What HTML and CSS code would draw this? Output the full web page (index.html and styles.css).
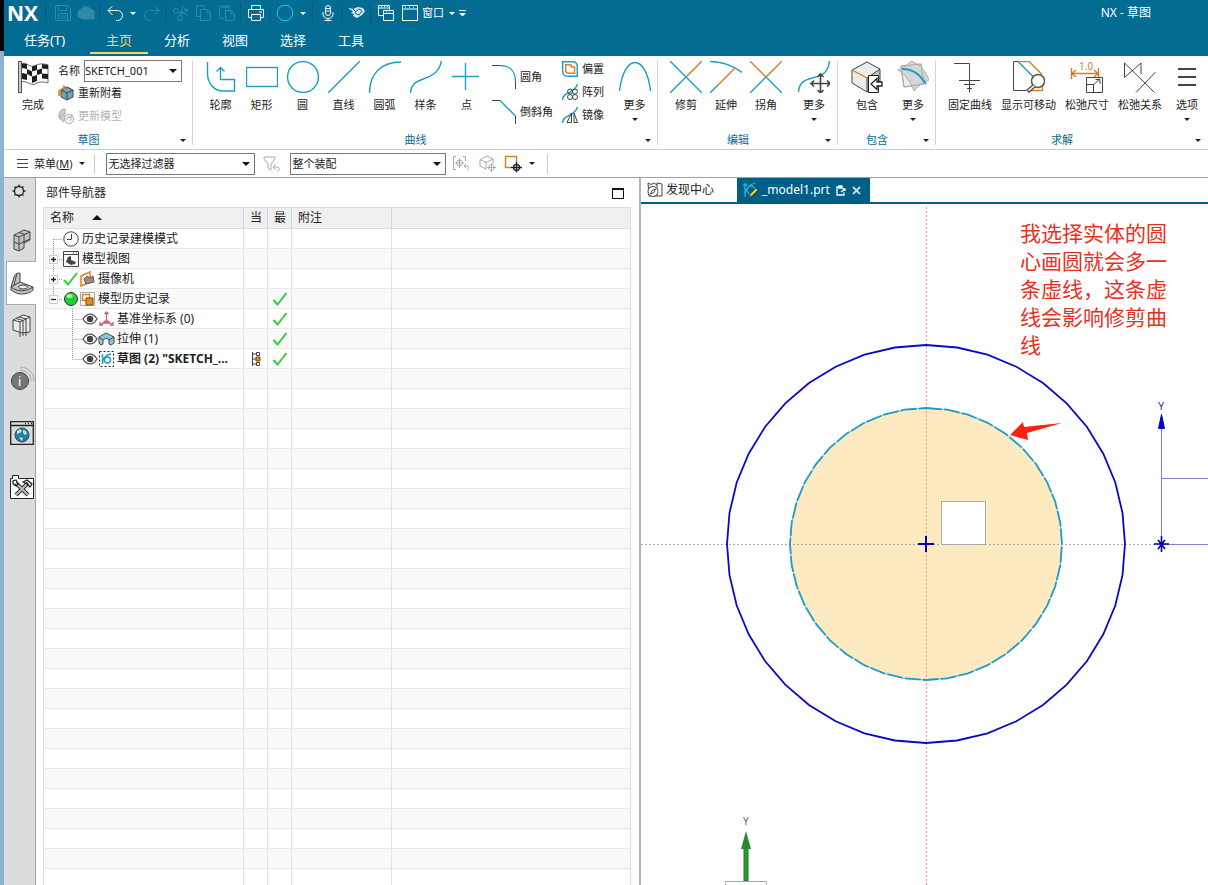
FILE: index.html
```html
<!DOCTYPE html>
<html lang="zh-CN">
<head>
<meta charset="utf-8">
<title>NX - 草图</title>
<link rel="stylesheet" href="styles.css">
</head>
<body>
<div class="app">
  <header class="titlebar">
    <div class="quickbar">
      <span class="logo">NX</span>
      <span class="qsep first"></span>
      <button class="qbtn dim" aria-label="保存"><svg width="18" height="18" viewBox="0 0 18 18"><path d="M1.500 1.500h12l3 3v12h-15zM4.500 1.500v5h8v-5M4.500 16.500v-7h9v7M6 12h6M6 14h6"/></svg></button>
      <button class="qbtn dim" aria-label="命令"><svg width="18" height="18" viewBox="0 0 18 18"><path class="dimfill" d="M1 7l8-5 8 5v8H5l-4-3z"/></svg></button>
      <span class="qsep"></span>
      <button class="qbtn" aria-label="撤销"><svg width="18" height="18" viewBox="0 0 18 18"><path d="M6.500 2L2 6.500 6.500 11M2 6.500h9.500a5 5 0 0 1 0 10H10"/></svg></button>
      <button class="qcaret" aria-label="撤销列表"><i class="caret"></i></button>
      <button class="qbtn dim" aria-label="重做"><svg width="18" height="18" viewBox="0 0 18 18"><path d="M11.500 2L16 6.500 11.500 11M16 6.500H6.500a5 5 0 0 0 0 10H8"/></svg></button>
      <span class="qsep"></span>
      <button class="qbtn dim" aria-label="剪切"><svg width="18" height="18" viewBox="0 0 18 18"><circle cx="4" cy="7" r="2.500"/><circle cx="8" cy="14" r="2.500"/><path d="M6 8l10 3M8 11.500L11 2M10 9l6-3-4-1"/></svg></button>
      <button class="qbtn dim" aria-label="复制"><svg width="18" height="18" viewBox="0 0 18 18"><path d="M5.500 12.500h-4v-11h8v4M5.500 5.500h7l3 3v8h-10zM12 5.500v3.500h3.500"/></svg></button>
      <button class="qbtn dim" aria-label="粘贴"><svg width="18" height="18" viewBox="0 0 18 18"><path d="M6 14.500H1.500v-12H4M9 2.500h2.500V5M4 3.500h5v-2H4zM7.500 6.500h6l3 3v7h-9zM13 6.500V10h3.500"/></svg></button>
      <span class="qsep"></span>
      <button class="qbtn" aria-label="打印"><svg width="18" height="18" viewBox="0 0 18 18"><path d="M4.500 5V1.500h9V5M4 13.500H1.500v-8h15v8H14M4.500 10.500h9v6h-9zM12 8h3"/></svg></button>
      <span class="qsep"></span>
      <button class="qbtn cyan" aria-label="圆"><svg width="18" height="18" viewBox="0 0 18 18"><circle cx="9" cy="9" r="7.800"/></svg></button>
      <button class="qcaret" aria-label="圆列表"><i class="caret"></i></button>
      <span class="qsep"></span>
      <button class="qbtn" aria-label="语音"><svg width="18" height="18" viewBox="0 0 18 18"><rect x="6.500" y="1.500" width="5" height="10" rx="2.500"/><path d="M7 4.500h4M7 7h4M4 8v2c0 6 10 6 10 0V8M9 14v3M5.500 16.500h7"/></svg></button>
      <span class="qsep"></span>
      <button class="qbtn" aria-label="触控"><svg width="18" height="18" viewBox="0 0 18 18"><path class="palefill" d="M1 4l4 1 5-2 5 1 2 3-3 4-5 3-4-2 1-2-3-1 2-2-4-2z"/><path class="hole" d="M7 8l4-3 3 2-3 4-3-1zM5 5l2 2"/></svg></button>
      <span class="qsep"></span>
      <button class="qbtn" aria-label="切换窗口"><svg width="18" height="18" viewBox="0 0 18 18"><path d="M6 11.500H1.500v-10h11V6M1.500 4h11M6.500 6.500h10v10h-10zM6.500 9.500h10M4 2.500h1M7 2.500h1M10 2.500h1M9 8h1M12 8h1"/></svg></button>
      <button class="qtext"><svg width="18" height="18" viewBox="0 0 18 18"><path d="M1.500 1.500h15v15h-15zM1.500 5h15M4 3.200h1M8 3.200h1M12 3.200h1"/></svg><span>窗口</span><i class="caret"></i></button>
      <button class="qcaret" aria-label="自定义"><i class="overline"></i></button>
      <h1 class="apptitle">NX - 草图</h1>
    </div>
    <nav class="tabs">
      <a class="tab task" href="#task">任务(T)</a>
      <a class="tab current" href="#home">主页</a>
      <a class="tab" href="#analysis">分析</a>
      <a class="tab" href="#view">视图</a>
      <a class="tab" href="#select">选择</a>
      <a class="tab" href="#tools">工具</a>
    </nav>
  </header>

  <section class="ribbon">
    <div class="group">
      <div class="tools sketch">
        <button class="tool"><svg width="32" height="32" viewBox="0 0 32 32"><path class="flag" d="M4 3c5-3 9 4 13 2s8-3 14-1v18c-6-2-9-1-13 1S9 19 4 21z"/><path class="blk" d="M5 2.500l5 .5v5L5 7zM15 5.500l5-1.500v5l-5 1.500zM25 3l6 1v4l-6-.5zM10 8l5 2.500v5L10 13zM20 9l5-1.500v5L20 14zM5 12l5 1v6l-5-1zM15 15.500l5-1.500v6l-5 2zM25 12.500l6 .5v5l-6-.5z"/><rect class="pole" x="1.500" y=".5" width="3" height="31"/></svg><span>完成</span></button>
        <div class="stack">
          <div class="namerow"><label for="skname">名称</label><span class="combo name"><select id="skname"><option>SKETCH_001</option></select></span></div>
          <button class="mini"><svg width="16" height="16" viewBox="0 0 16 16"><path class="cube1" d="M3 5l6-3 6 3v7l-6 3-6-3z"/><path class="k" d="M3 5l6 3 6-3M9 8v7M3 5l6-3 6 3v7l-6 3-6-3z"/><path class="o2" d="M1 11V6l6-4M5 1l2 1-1 2M1 8l3 3"/></svg><span>重新附着</span></button>
          <button class="mini" disabled><svg width="16" height="16" viewBox="0 0 16 16"><path class="gfill" d="M1 10V7c0-4 3-6 6-6v6l3 2-4 5z"/><path class="g" d="M1 10V7c0-4 3-6 6-6v5M1 10l5 4M7 6l-6 3"/><circle class="g whitein" cx="11" cy="11" r="4.500"/><path class="g" d="M9 12a2.200 2.200 0 1 1 3 1M14 6v3h-3"/></svg><span>更新模型</span></button>
        </div>
      </div>
      <footer class="gfoot"><h2>草图</h2><button class="launch" aria-label="草图选项"><i class="caret"></i></button></footer>
    </div>
    <div class="group">
      <div class="tools curves">
        <button class="tool"><svg width="32" height="32" viewBox="0 0 32 32"><path class="c" d="M2.500 1v11c0 10 6 18 16 18h11V18.500h-14V7M11.500 10.500l4-4 4 4"/></svg><span>轮廓</span></button>
        <button class="tool"><svg width="32" height="32" viewBox="0 0 32 32"><rect class="c" x=".5" y="6.500" width="31" height="19"/></svg><span>矩形</span></button>
        <button class="tool"><svg width="32" height="32" viewBox="0 0 32 32"><circle class="c" cx="16" cy="16" r="15.400"/></svg><span>圆</span></button>
        <button class="tool"><svg width="32" height="32" viewBox="0 0 32 32"><path class="c" d="M0 32L32 0"/></svg><span>直线</span></button>
        <button class="tool"><svg width="32" height="32" viewBox="0 0 32 32"><path class="c" d="M.5 32C.5 12 13 1 32 1"/></svg><span>圆弧</span></button>
        <button class="tool"><svg width="32" height="32" viewBox="0 0 32 32"><path class="c" d="M.5 32C2 12 26 24 31.500 0"/></svg><span>样条</span></button>
        <button class="tool"><svg width="32" height="32" viewBox="0 0 32 32"><path class="c" d="M1 15.500h27M14.500 2v27"/></svg><span>点</span></button>
        <div class="stack corner">
          <button class="mini"><svg width="24" height="24" viewBox="0 0 24 24"><path class="k" d="M0 .5h9M23.500 15v9"/><path class="c" d="M8 .5c10 0 15.500 6 15.500 16"/></svg><span>圆角</span></button>
          <button class="mini"><svg width="24" height="24" viewBox="0 0 24 24"><path class="k" d="M0 .5h8M23.500 16v8"/><path class="c" d="M8 .5l15.500 15.500"/></svg><span>倒斜角</span></button>
        </div>
        <div class="stack">
          <button class="mini"><svg width="16" height="16" viewBox="0 0 16 16"><path class="c" d="M.7.700h10c3 0 4.500 2 4.500 5v9.600h-9c-4 0-5.500-2-5.500-5z"/><path class="o2" d="M3.700 3.700h4.300c1.500 0 1.500 1 1.500 2.300h3v6.300H7c-2 0-3.300-1-3.300-3z"/></svg><span>偏置</span></button>
          <button class="mini"><svg width="16" height="16" viewBox="0 0 16 16"><path class="c" d="M.5 16C1 7 13 10 15.500 0"/><circle class="k" cx="8" cy="7.500" r="2.500"/><circle class="k" cx="13" cy="7.500" r="2.500"/><circle class="k" cx="8" cy="13" r="2.500"/><circle class="k" cx="13" cy="13" r="2.500"/></svg><span>阵列</span></button>
          <button class="mini"><svg width="16" height="16" viewBox="0 0 16 16"><path class="c" d="M.5 16C1 7 13 10 15.500 0"/><path class="k" d="M9.500 6v9.500H5zM12 6v9.500h3.500z"/></svg><span>镜像</span></button>
        </div>
        <button class="tool"><svg width="32" height="32" viewBox="0 0 32 32"><path class="c" d="M.5 30C5-8 27-8 31.500 30"/></svg><span>更多</span><i class="caret"></i></button>
      </div>
      <footer class="gfoot"><h2>曲线</h2><button class="launch" aria-label="曲线选项"><i class="caret"></i></button></footer>
    </div>
    <div class="group">
      <div class="tools edit">
        <button class="tool"><svg width="32" height="32" viewBox="0 0 32 32"><path class="c" d="M0 0l32 32M0 32l16-16"/><path class="o" d="M16 16L32 0"/></svg><span>修剪</span></button>
        <button class="tool"><svg width="32" height="32" viewBox="0 0 32 32"><path class="c" d="M0 .5c13 0 23 4 32 11M0 32l8-8"/><path class="o" d="M8 24L25 7"/></svg><span>延伸</span></button>
        <button class="tool"><svg width="32" height="32" viewBox="0 0 32 32"><path class="c" d="M0 32l16-16 16 16"/><path class="o" d="M0 0l16 16L32 0"/></svg><span>拐角</span></button>
        <button class="tool last"><svg width="32" height="32" viewBox="0 0 32 32"><path class="c" d="M.5 31C2 9 29 25 31.500 0"/><path class="k move" d="M22.500 13v19M13 22.500h19M19.500 16l3-3 3 3M19.500 29l3 3 3-3M16 19.500l-3 3 3 3M29 19.500l3 3-3 3"/></svg><span>更多</span><i class="caret"></i></button>
      </div>
      <footer class="gfoot"><h2>编辑</h2><button class="launch" aria-label="编辑选项"><i class="caret"></i></button></footer>
    </div>
    <div class="group">
      <div class="tools include">
        <button class="tool"><svg width="32" height="32" viewBox="0 0 32 32"><path class="lite" d="M1 9l15-8 13 7v15l-13 8-15-9z"/><path class="mid" d="M16 17l13-9v15l-13 8z"/><path class="k" d="M1 9l15-8 13 7v15l-13 8-15-9zM16 17l13-9M16 17v14"/><path class="o" d="M1 9l15 8"/><path class="whitebox" d="M17.500 14.500h10v17h-10z"/><path class="k2 whitein" d="M31 21v4h-5v3.500l-6-5.500 6-5.500V21z"/></svg><span>包含</span></button>
        <button class="tool"><svg width="32" height="32" viewBox="0 0 32 32"><path class="lite g" d="M4 5l20-2 3 20-20 3z"/><path class="soft g" d="M1 9C9 6 14 0 14 0c10 4 15 11 18 19-6 2-11 6-15 11C14 21 8 13 1 9z"/><path class="g" d="M4 5l20-2 3 20-20 3z"/><path class="c thick" d="M5 8c12 0 18 6 24 15"/></svg><span>更多</span><i class="caret"></i></button>
      </div>
      <footer class="gfoot"><h2>包含</h2><button class="launch" aria-label="包含选项"><i class="caret"></i></button></footer>
    </div>
    <div class="group">
      <div class="tools solve">
        <button class="tool"><svg width="32" height="32" viewBox="0 0 32 32"><path class="k" d="M0 2.500h15.500v29M5 19.500h21M10 23.500h11M13 27.500h5"/></svg><span>固定曲线</span></button>
        <button class="tool"><svg width="32" height="32" viewBox="0 0 32 32"><path class="k" d="M13 29.500H.500V.500h5"/><path class="c" d="M5 .5l18 18"/><path class="o" d="M5 .5h11l13 13M29.500 24v5.500H18"/><circle class="lens" cx="25" cy="20" r="6.500"/><path class="lens" d="M20 24l-6 5 2 2 6-5"/></svg><span>显示可移动</span></button>
        <button class="tool"><svg class="spill" width="32" height="32" viewBox="0 0 32 32"><text class="dim10" x="8" y="9">1.0</text><path class="o" d="M.5 7v11M27.500 7v11M1 12.500h26M5 9l-4 3.500L5 16M23 9l4 3.500-4 3.500"/><path class="k whitein" d="M15.500 16.500h16v15h-16z"/><path class="k" d="M15.500 23.500h7v8M22 24l7-6M24.500 18.500H29V23"/></svg><span>松弛尺寸</span></button>
        <button class="tool"><svg width="32" height="32" viewBox="0 0 32 32"><path class="k" d="M.5 2v14.500L17 2v11M.500 2l30 29.500M31.500 11L12 31.500"/></svg><span>松弛关系</span></button>
        <button class="tool"><svg width="20" height="32" viewBox="0 0 20 32"><path class="k bars" d="M1 8h18M1 16h18M1 24h18"/></svg><span>选项</span><i class="caret"></i></button>
      </div>
      <footer class="gfoot"><h2>求解</h2><button class="launch" aria-label="求解选项"><i class="caret"></i></button></footer>
    </div>
  </section>

  <section class="selbar">
    <button class="menu"><svg width="11" height="11" viewBox="0 0 11 11"><path class="k" d="M0 1.500h11M0 5.500h11M0 9.500h11"/></svg><span>菜单(<u>M</u>)</span><i class="caret"></i></button>
    <span class="vsep lead"></span>
    <span class="combo types"><select aria-label="选择过滤器"><option>无选择过滤器</option></select></span>
    <button class="sbtn reset" aria-label="重置过滤器"><svg width="18" height="18" viewBox="0 0 18 18"><path class="g" d="M1 2h11v2L8 9v6l-3-2V9L1 4zM10 12h4c3 0 3 4 0 4M12.500 9.500L10 12l2.500 2.500"/></svg></button>
    <span class="combo"><select aria-label="选择范围"><option>整个装配</option></select></span>
    <button class="sbtn snap" aria-label="捕捉点"><svg width="18" height="18" viewBox="0 0 18 18"><path class="g" d="M4 1.500H1.500v13H4M11 1.500h2.500V6M7.500 3v10M3 8h9M13 11h2c2 0 2 4 0 4M14 9l-2 2 2 2"/><circle class="g" cx="7.500" cy="8" r="3"/></svg></button>
    <button class="sbtn" aria-label="实体捕捉"><svg width="18" height="18" viewBox="0 0 18 18"><path class="g" d="M1 4.500L8 1l6 3M1 4.500l6 3 7-3.500M7 7.500v7M1 4.500V11l6 3M14 4v4M12.500 8v9M8 12.500h9"/><circle class="g" cx="12.500" cy="12.500" r="3"/></svg></button>
    <button class="sbtn" aria-label="选择框"><svg width="18" height="18" viewBox="0 0 18 18"><path class="o2" d="M7 12.500H1.500v-11h11V8"/><path class="k2" d="M12.500 7v10.500M7 12.500h11"/><circle class="k2" cx="12.500" cy="12.500" r="3"/></svg></button>
    <button class="scaret" aria-label="选择框列表"><i class="caret"></i></button>
    <span class="vsep"></span>
  </section>

  <main class="body">
    <aside class="rail">
      <button class="gear" aria-label="设置"><svg width="16" height="16" viewBox="0 0 16 16"><circle class="k2" cx="8" cy="8" r="4.500"/><path class="k2" d="M8 1.500v2M8 12.500v2M1.500 8h2M12.500 8h2M3.500 3.500l1 1M11.500 11.500l1 1M12.500 3.500l-1 1M4.500 11.500l-1 1"/></svg></button>
      <button aria-label="装配导航器"><svg width="20" height="24" viewBox="0 0 20 24"><path class="mid" d="M2 7l10-5 6 2v8l-6 3v5l-5 3-5-2z"/><path class="k" d="M2 7l10-5 6 2v8l-6 3v5l-5 3-5-2zM2 7l5 2 11-5M7 9v14M12 7v8M2 14l5 2 11-5M7 4.500l6 2"/></svg></button>
      <button class="active" aria-label="部件导航器"><svg width="26" height="24" viewBox="0 0 26 24"><path class="mid" d="M2 16L5 6c1-4 4-4 6-4v9l13 5v3c-4 4-12 5-17 3l-5-3z"/><path class="k" d="M2 16L5 6c1-4 4-4 6-4v9l13 5v3c-4 4-12 5-17 3l-5-3zM2 16l9-5M2 16c6 5 15 5 22 0M8 2l-3 12"/><ellipse class="k lite" cx="14" cy="16" rx="4.500" ry="2"/></svg></button>
      <button class="book" aria-label="重用库"><svg width="20" height="24" viewBox="0 0 20 24"><path class="lite k" d="M1 6l10-5 7 2v15l-8 1-9-3z"/><path class="k" d="M1 6l7 2v15M8 8l10-5M4 4.500l7 2M11 6.500V22M7 3l7 2v17"/></svg></button>
      <button class="tall" aria-label="信息"><svg width="26" height="26" viewBox="0 0 26 26"><circle class="info" cx="11" cy="15" r="8.500"/><text class="infoi" x="9" y="20">i</text><path class="g" d="M11 4c6 0 11 5 11 11M11 1c8 0 14 6 14 14"/></svg></button>
      <button class="tall" aria-label="浏览器"><svg width="24" height="24" viewBox="0 0 24 24"><path class="k2" d="M.7.700h22.600v22.600H.700zM.700 4.500h22.600"/><path class="k2" d="M15 2.500h1M18 2.500h1M21 2.500h1"/><circle class="globe" cx="12" cy="14" r="7"/><path class="land" d="M7 10l3-2 2 2-2 2-3 1zM13 9l3 1 1 3-2 1-2-2zM9 16l4 1-1 3-2-2z"/></svg></button>
      <button class="tall" aria-label="工具箱"><svg width="24" height="24" viewBox="0 0 24 24"><path class="whitebox" d="M.5 3.500h2v-3h6v3h15v20H.500z"/><path class="wrench" d="M6 8l12 12M18 8L6 20"/><path class="metal" d="M6 8l12 12M17 9L6 20"/><path class="k2" d="M3 6v3l3 2 2-2-2-4zM13 7l4-2 5 4-2 3-3-3z"/></svg></button>
    </aside>

    <section class="navigator">
      <div class="navhead"><h2>部件导航器</h2><button class="maxi" aria-label="最大化"></button></div>
      <div class="treewrap">
      <table class="tree">
        <thead><tr><th class="cname">名称 <i class="sort"></i></th><th class="cs">当</th><th class="cs">最</th><th class="cnote">附注</th><th></th></tr></thead>
        <tbody>
          <tr><td><div class="node"><svg class="guide" width="18" height="20"><path class="dots" d="M9.500 10v10M9.500 10.500H18"/></svg><svg width="18" height="18" viewBox="0 0 18 18"><circle class="k" cx="9" cy="9" r="7.200"/><path class="k" d="M9.500 4v5.500H5"/></svg><span class="lbl">历史记录建模模式</span></div></td><td></td><td></td><td></td><td></td></tr>
          <tr><td><div class="node"><svg class="guide" width="18" height="20"><path class="dots" d="M9.500 0v20M13 10.500h5"/><path class="box" d="M5.500 6.500h8v8h-8z"/><path class="k2" d="M7 10.500h5M9.500 8v5"/></svg><svg width="18" height="18" viewBox="0 0 18 18"><path class="k" d="M1.500 1.500h15v15h-15zM1.500 4.500h15M11 3h1M14 3h1"/><path class="dark" d="M4 12l2-5 3-1v4l5 2-1 2-4 1z"/></svg><span class="lbl">模型视图</span></div></td><td></td><td></td><td></td><td></td></tr>
          <tr><td><div class="node"><svg class="guide" width="18" height="20"><path class="dots" d="M9.500 0v20M13 10.500h5"/><path class="box" d="M5.500 6.500h8v8h-8z"/><path class="k2" d="M7 10.500h5M9.500 8v5"/></svg><svg width="17" height="16" viewBox="0 0 17 16"><path class="tick" d="M2 9l4 4.500L15 2"/></svg><svg width="17" height="18" viewBox="0 0 17 18"><path class="o2" d="M2 6l9-4v10l-9 4z"/><path class="cam" d="M5 9l3-3 3 2 3-2 1 6-4 1-4 1z"/></svg><span class="lbl">摄像机</span></div></td><td></td><td></td><td></td><td></td></tr>
          <tr><td><div class="node"><svg class="guide" width="18" height="20"><path class="dots" d="M9.500 0v7M13 10.500h5"/><path class="box" d="M5.500 6.500h8v8h-8z"/><path class="k2" d="M7 10.500h5"/></svg><svg width="17" height="16" viewBox="0 0 17 16"><circle class="ball" cx="9" cy="8" r="6.500"/><ellipse class="shine" cx="7.500" cy="5" rx="3" ry="2"/></svg><svg width="17" height="16" viewBox="0 0 17 16"><path class="g" d="M1.500 1.500h14v13h-14z"/><path class="o2" d="M3.500 3.500h7v6h-7z"/><path class="ofill" d="M7 7h7v7H7z"/></svg><span class="lbl">模型历史记录</span></div></td><td></td><td><svg class="ok" width="16" height="16" viewBox="0 0 16 16"><path class="tick" d="M1.500 9l4 4.500L14.500 2"/></svg></td><td></td><td></td></tr>
          <tr><td><div class="node"><svg class="guide" width="38" height="20"><path class="dots" d="M28.500 0v20M28.500 10.500H38"/></svg><svg width="16" height="16" viewBox="0 0 16 16"><path class="eye" d="M1 8c4-6.500 10-6.500 14 0-4 6.500-10 6.500-14 0z"/><circle class="dark" cx="8" cy="8" r="3.200"/></svg><svg width="17" height="16" viewBox="0 0 17 16"><path class="rose" d="M8.500 1v9L2 14M8.500 10l6.500 4M6.500 3l2-2 2 2M2 11v3h3M15 11v3h-3M5 12a4 4 0 0 1 7 0z"/></svg><span class="lbl">基准坐标系 (0)</span></div></td><td></td><td><svg class="ok" width="16" height="16" viewBox="0 0 16 16"><path class="tick" d="M1.500 9l4 4.500L14.500 2"/></svg></td><td></td><td></td></tr>
          <tr><td><div class="node"><svg class="guide" width="38" height="20"><path class="dots" d="M28.500 0v20M28.500 10.500H38"/></svg><svg width="16" height="16" viewBox="0 0 16 16"><path class="eye" d="M1 8c4-6.500 10-6.500 14 0-4 6.500-10 6.500-14 0z"/><circle class="dark" cx="8" cy="8" r="3.200"/></svg><svg width="17" height="16" viewBox="0 0 17 16"><path class="sky" d="M1 6l7-4 8 4v6l-3 2-2-1V9L8 7 5 9v4l-2 1-2-2z"/><path class="k" d="M1 6l7-4 8 4v6l-3 2-2-1V9L8 7 5 9v4l-2 1-2-2zM1 6l4 3M16 6l-5 3"/></svg><span class="lbl">拉伸 (1)</span></div></td><td></td><td><svg class="ok" width="16" height="16" viewBox="0 0 16 16"><path class="tick" d="M1.500 9l4 4.500L14.500 2"/></svg></td><td></td><td></td></tr>
          <tr><td><div class="node"><svg class="guide" width="38" height="20"><path class="dots" d="M28.500 0v10M28.500 10.500H38"/></svg><svg width="16" height="16" viewBox="0 0 16 16"><path class="eye" d="M1 8c4-6.500 10-6.500 14 0-4 6.500-10 6.500-14 0z"/><circle class="dark" cx="8" cy="8" r="3.200"/></svg><svg width="17" height="16" viewBox="0 0 17 16"><path class="dashbox" d="M1.500.500h14v15h-14z"/><path class="c" d="M4.500 3v10M4.500 13C4.500 6 8 4 13 3"/><circle class="c" cx="9.500" cy="9" r="3"/></svg><span class="lbl bold">草图 (2) "SKETCH_...</span></div></td><td><svg class="ok" width="12" height="16" viewBox="0 0 12 16"><path class="k" d="M2.500 1v14M2 3h4M2 8h4M2 13h4M6.500 1.500h3v3h-3zM6.500 11.500h3v3h-3z"/><path class="ofill" d="M6 6h4v4H6z"/></svg></td><td><svg class="ok" width="16" height="16" viewBox="0 0 16 16"><path class="tick" d="M1.500 9l4 4.500L14.500 2"/></svg></td><td></td><td></td></tr>
          <tr class="blank"><td></td><td></td><td></td><td></td><td></td></tr>
        </tbody>
      </table>
      </div>
    </section>

    <section class="workspace">
      <div class="doctabs">
        <button class="doc"><svg width="18" height="18" viewBox="0 0 18 18"><path class="k" d="M2 2l3 1.500L8 2l3 2v11H3zM11 4V2l5 1v12h-5"/><circle class="k whitein" cx="7" cy="10.500" r="5"/><path class="k" d="M9.500 8L8 11.500 4.500 13 6 9.500z"/></svg><span>发现中心</span></button>
        <div class="doc open"><svg width="18" height="18" viewBox="0 0 18 18"><path class="cy" d="M1 4h4M3 2v14M3 15C3 7 7 4 13 2"/><circle class="cy" cx="9" cy="9" r="4"/><path class="pencil" d="M7 16l1-3 6-6 2 2-6 6z"/></svg><span>_model1.prt</span><svg class="mod" width="10" height="11" viewBox="0 0 10 11"><path class="w" d="M8 7.500V10H1V2h5.500M3 1h3v2H3z"/><path class="w" d="M5 7l4-3M6.500 3.500L9 4v2"/></svg><button class="close" aria-label="关闭"><svg width="9" height="9" viewBox="0 0 9 9"><path class="x" d="M1 1l7 7M8 1L1 8"/></svg></button></div>
      </div>
      <div class="canvas">
        <svg class="scene" width="100%" height="100%">
          <polygon class="face" id="inner"/>
          <path class="vaxis" d="M285.500 3v900"/>
          <path class="haxis" d="M0 340.500h520"/>
          <polygon class="outer" id="outer"/>
          <polygon class="dashed" id="ring"/>
          <rect class="pick" x="300.500" y="297.500" width="44" height="43"/>
          <path class="cross" d="M277 340h16M285 332v16"/>
          <path class="arrow" d="M369 231l13-13 1 5 38-4-35 10 1 7z"/>
          <path class="csys" d="M520.500 222v118M520.500 274.500H900M520.500 340.500H900"/>
          <path class="head" d="M517.500 224.500l3-14 3 14z"/>
          <path class="star" d="M513 340h15M520.500 332v16M517 336l7 9M524 336l-7 9"/>
          <text class="ylab" x="517" y="206">Y</text>
        </svg>
        <svg class="triad" width="60" height="76"><path class="gshaft" d="M27 39h4v33h-4z"/><path class="ghead" d="M24 40l5-18 5 18z"/><text class="gy" x="26" y="16">Y</text><path class="g" d="M8.500 76v-3.500h41V76"/></svg>
        <p class="note">我选择实体的圆心画圆就会多一条虚线，这条虚线会影响修剪曲线</p>
      </div>
    </section>
  </main>
</div>
<script src="scene.js"></script>
</body>
</html>
```

FILE: styles.css
```css
* { box-sizing: border-box; }
body, h1, h2, p { margin: 0; font-weight: normal; }
body {
  font: 11px/16px "Noto Sans", "Noto Sans CJK SC", sans-serif;
  color: #222;
  background: #fff;
}
button, select { font: inherit; color: inherit; }
button { border: 0; padding: 0; background: none; }
svg { display: block; flex: none; fill: none; }
.app {
  min-height: 100vh;
  display: flex;
  flex-direction: column;
  border-left: 4px solid;
  border-image: linear-gradient(#000 52px, #8fb4d3 52px) 1;
}
.caret {
  display: inline-block;
  border: 3px solid transparent;
  border-top-color: currentColor;
  border-bottom: 0;
}

/* Title bar */
.titlebar { background: #036c92; color: #fff; height: 56px; }
.quickbar { display: flex; align-items: center; height: 26px; }
.logo { width: 38px; padding-left: 3px; font: bold 21px/26px "Open Sans", sans-serif; }
.qsep { width: 1px; height: 19px; margin: 0 3px 0 2px; background: #05597a; }
.qsep.first { margin: 0 5px 0 3px; }
.qbtn { width: 23px; display: flex; justify-content: center; }
.quickbar svg { stroke: #fff; }
.quickbar .dim svg { stroke: #2f89a9; }
.quickbar .cyan svg { stroke: #0fd0f0; }
.quickbar .dimfill { fill: #2f89a9; }
.palefill { fill: #d5e8ee; stroke: none; }
.hole { stroke: #036c92; }
.qcaret { width: 14px; display: flex; justify-content: center; }
.qtext { display: flex; align-items: center; gap: 3px; margin-left: 4px; }
.qtext .caret { margin-left: 2px; }
.overline { width: 7px; height: 7px; border: 3px solid transparent; border-top-color: #fff; border-bottom: 0; position: relative; top: 3px; }
.overline::before { content: ""; position: absolute; left: -3px; top: -6px; width: 7px; height: 1px; background: #fff; }
.apptitle { margin-left: auto; padding-right: 57px; font-size: 12px; }
.tabs { display: flex; height: 28px; font-size: 13px; line-height: 29px; }
.tab { width: 58px; text-align: center; color: #fff; text-decoration: none; }
.tab.task { width: 86px; text-align: left; padding-left: 20px; }
.tab.current { color: #f3d465; border-bottom: 2px solid #f3d465; }

/* Icon strokes */
.c { stroke: #1a9fc4; stroke-width: 1.4; }
.c.thick { stroke-width: 2; }
.k { stroke: #444; }
.k2 { stroke: #222; stroke-width: 1.3; }
.o { stroke: #e07a20; stroke-width: 1.4; }
.o2 { stroke: #d9822b; stroke-width: 1.5; }
.g { stroke: #aaa; }
.gfill { fill: #ccc; }
.lite { fill: #ececec; }
.mid { fill: #c2c2c2; }
.soft { fill: #d6d6d6; }
.move { stroke-width: 1.6; }
.bars { stroke-width: 2; }
.flag { fill: #fff; stroke: #666; }
.blk { fill: #1d1d1d; }
.pole { fill: #ccc; stroke: #555; }
.cube1 { fill: #6fa3b5; }
.whitebox { fill: #fff; stroke: #222; }
.whitein { fill: #fff; }
.lens { fill: #fff; stroke: #555; stroke-width: 1.5; }
.dim10 { fill: #e07a20; font-size: 10px; }
.spill { overflow: visible; }

/* Ribbon */
.ribbon {
  display: grid;
  grid-template-columns: 189fr 465fr 180fr 98fr 272fr;
  padding-top: 5px;
  height: 94px;
  border-bottom: 1px solid #ccc;
}
.group { display: flex; flex-direction: column; position: relative; min-width: 0; }
.group:not(:last-child)::after { content: ""; position: absolute; right: 0; top: 0; bottom: 4px; width: 1px; background: #d5d5d5; }
.tools { display: flex; flex: 1 1 0; min-height: 0; align-items: flex-start; }
.tool { display: flex; flex-direction: column; align-items: center; min-width: 40px; white-space: nowrap; }
.tool span { margin-top: 4px; }
.tool .caret { margin-top: 5px; }
.gfoot { display: flex; height: 18px; align-items: center; }
.gfoot h2 { flex: 1; text-align: center; font-size: 11px; color: #0a6a8e; }
.launch { width: 20px; height: 16px; display: flex; align-items: center; justify-content: center; }
.stack { display: flex; flex-direction: column; align-items: flex-start; }
.mini { display: flex; align-items: center; gap: 4px; height: 23px; white-space: nowrap; }
.mini:disabled { color: #b5b5b5; }
.sketch { padding-left: 8px; }
.sketch .tool { min-width: 42px; margin-right: 4px; }
.namerow { display: flex; align-items: center; gap: 4px; height: 20px; }
.curves { padding-left: 7px; }
.curves > .tool { min-width: 41px; }
.curves .corner { margin: 4px 9px 0 5px; }
.curves .corner .mini { height: 35px; align-items: flex-start; }
.corner .mini span { margin-top: 4px; }
.curves > .stack:not(.corner) { margin: -4px 10px 0 0; }
.edit { padding-left: 8px; }
.edit .last { margin-left: 8px; }
.include { padding-left: 6px; }
.include .tool { min-width: 46px; }
.solve { padding-left: 12px; gap: 9px; }
.solve .tool:last-child { min-width: 32px; }
.combo { position: relative; display: block; }
.combo::after {
  content: "";
  position: absolute;
  right: 5px;
  top: 9px;
  border: 4px solid transparent;
  border-top-color: #111;
  border-bottom: 0;
  pointer-events: none;
}
.combo select {
  appearance: none;
  display: block;
  width: 156px;
  height: 22px;
  padding: 0 2px;
  border: 1px solid #777;
  border-radius: 0;
  background: #fff;
}
.combo.types select { width: 149px; }
.combo.name select { width: 98px; padding: 0; }

/* Selection bar */
.selbar { display: flex; align-items: center; height: 28px; border-bottom: 1px solid #a0a0a0; }
.menu { display: flex; align-items: center; gap: 6px; margin: 0 9px 0 13px; }
.vsep { width: 1px; height: 20px; background: #ccc; }
.vsep.lead { margin-right: 11px; }
.sbtn { width: 25px; display: flex; justify-content: center; }
.sbtn.reset { width: 35px; }
.sbtn.snap { width: 30px; }
.scaret { width: 13px; margin-right: 8px; display: flex; justify-content: center; }

/* Body */
.body { flex: 1; display: grid; grid-template-columns: 32px 605fr 567fr; }
.rail { background: #dcdcdc; border-right: 1px solid #a5a5a5; display: flex; flex-direction: column; }
.rail button { height: 43px; display: flex; align-items: center; justify-content: center; flex: none; padding-left: 5px; }
.rail .gear { height: 26px; margin-bottom: 14px; padding: 0 2px 0 0; }
.rail .active { height: 44px; background: #fff; margin: 0 -1px 0 2px; border: 1px solid #aaa; border-right: 0; padding: 0; }
.rail .book { margin-bottom: 5px; height: 42px; }
.rail .tall { height: 54px; }
.info { fill: #777; stroke: #444; }
.infoi { fill: #fff; font-size: 13px; }
.globe { fill: #23809f; stroke: #345; }
.land { fill: #bfe0ea; }
.wrench { stroke: #333; stroke-width: 4; }
.metal { stroke: #bbb; stroke-width: 2; }

.navigator { min-width: 0; display: flex; flex-direction: column; padding: 0 8px 0 7px; border-right: 2px solid #b5b5b5; font-size: 12px; }
.navhead { display: flex; align-items: center; justify-content: space-between; height: 29px; padding: 0 7px 0 3px; }
.navhead h2 { font-size: 12px; }
.maxi { width: 12px; height: 11px; margin-top: 2px; border: 1px solid #111; border-top-width: 2px; }
.treewrap { flex: 1; display: flex; border: 1px solid #ddd; border-bottom: 0; }
.tree { width: 100%; table-layout: fixed; border-collapse: separate; border-spacing: 0; }
.tree th { height: 21px; padding: 0 6px; text-align: left; font-weight: normal; background: #f0f0f0; border-bottom: 1px solid #ddd; border-right: 1px solid #d5d5d5; }
.tree .cname { width: 200px; }
.tree .cs { width: 24px; }
.tree .cnote { width: 100px; }
.tree th:last-child, .tree td:last-child { border-right: 0; }
.tree td { height: 20px; padding: 0; border-right: 1px solid #e2e2e2; border-bottom: 1px solid #e8e8e8; }
.tree tr:nth-child(even) td { background: #f9f9f9; }
.tree tr.blank:last-child td {
  height: auto;
  border-bottom: 0;
  background: repeating-linear-gradient(#f9f9f9 0 19px, #e8e8e8 19px 20px, #fff 20px 39px, #e8e8e8 39px 40px);
}
.tree tr:not(.blank) { height: 20px; }
.sort { display: inline-block; margin: 0 0 2px 15px; border: 5px solid transparent; border-bottom-color: #111; border-top: 0; }
.node { display: flex; align-items: center; height: 19px; overflow: hidden; white-space: nowrap; }
.lbl { margin-left: 2px; }
.bold { font-weight: bold; }
.ok { margin: 0 auto; }
.dots { stroke: #999; stroke-dasharray: 1 1; }
.box { fill: #fff; stroke: #ccc; }
.tick { stroke: #2fd03c; stroke-width: 2; }
.ball { fill: #25cc36; stroke: #333; }
.shine { fill: #a5f5ad; }
.dark { fill: #444; }
.cam { fill: #a58a70; stroke: #555; }
.eye { fill: #fff; stroke: #555; stroke-width: 1.4; }
.rose { stroke: #c8607c; stroke-width: 1.4; }
.sky { fill: #8cc9df; }
.ofill { fill: #e58a20; stroke: #7a4a10; }
.dashbox { stroke: #222; stroke-dasharray: 2 2; }

/* Drawing area */
.workspace { min-width: 0; display: flex; flex-direction: column; }
.doctabs { display: flex; height: 26px; border-bottom: 2px solid #005f87; font-size: 12px; }
.doc { display: flex; align-items: center; width: 96px; gap: 2px; padding-left: 5px; }
.doc.open { width: 133px; background: #005f87; color: #fff; }
.mod { margin-left: 4px; }
.close { margin-left: 4px; }
.cy { stroke: #25b6dd; stroke-width: 1.3; }
.pencil { fill: #eebf4e; stroke: #5a4a20; }
.w { stroke: #fff; stroke-width: 1.3; }
.x { stroke: #c8dbe4; stroke-width: 1.8; }
.canvas { flex: 1; position: relative; overflow: hidden; background: #fff; }
.scene { position: absolute; inset: 0; }
.face { fill: #fdeac0; stroke: #a9b8b0; }
.vaxis { stroke: #ff9090; stroke-dasharray: 2 2; }
.haxis { stroke: #aaa; stroke-dasharray: 2 2; }
.outer { stroke: #0909c8; stroke-width: 1.8; }
.dashed { stroke: #1c9dcc; stroke-width: 1.8; stroke-dasharray: 16 2; }
.pick { fill: #fff; stroke: #aaa; }
.cross { stroke: #0000b0; stroke-width: 2; }
.arrow { fill: #fb2010; }
.csys { stroke: #8080d8; }
.head { fill: #0000d0; stroke: #0000d0; }
.star { stroke: #0000a8; stroke-width: 1.6; }
.ylab { fill: #3434c0; font-size: 11px; }
.triad { position: absolute; left: 76px; bottom: 0; overflow: visible; }
.gshaft { fill: #2b9a33; stroke: #1d7526; }
.ghead { fill: #248a2c; }
.gy { fill: #3f7f45; font-size: 10px; }
.note { position: absolute; left: 379px; top: 15px; width: 148px; color: #e8301f; font-size: 21px; line-height: 28px; }
```

FILE: scene.js
```js
function ring(id, radius, sides) {
  const points = [];
  for (let i = 0; i < sides; i++) {
    const a = (i * 2 * Math.PI) / sides;
    points.push((285 + radius * Math.sin(a)).toFixed(1) + "," + (340 - radius * Math.cos(a)).toFixed(1));
  }
  document.getElementById(id).setAttribute("points", points.join(" "));
}
ring("outer", 199, 40);
ring("inner", 136, 40);
ring("ring", 136, 40);
```
